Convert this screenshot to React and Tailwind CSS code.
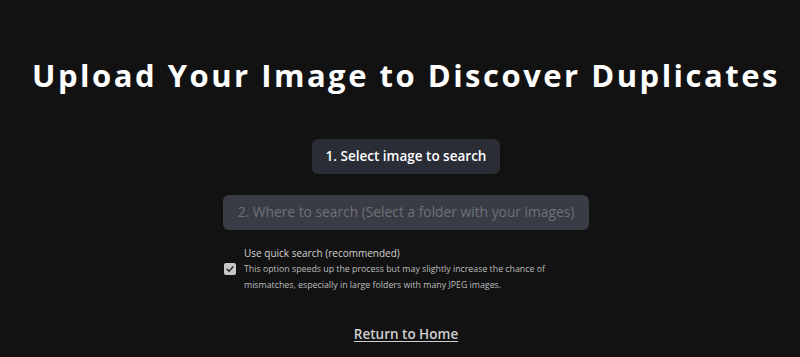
export default function App() {
  return (
    <div className="min-h-[357px] bg-[#121212] font-['Open_Sans',sans-serif] text-white">
      <div className="flex flex-col items-center pl-[12px] pt-[56px]">
        <h1 className="text-[31px] font-bold leading-[38px] tracking-[2.5px] text-white">
          Upload Your Image to Discover Duplicates
        </h1>

        <button className="mt-[45px] h-[35px] rounded-md bg-[#2a2d35] px-[14px] text-[13.5px] font-semibold text-white">
          1. Select image to search
        </button>

        <button
          disabled
          className="mt-[21px] h-[35px] w-[366px] rounded-md bg-[#393c44] text-[13.8px] text-[#6e7178]"
        >
          2. Where to search (Select a folder with your images)
        </button>

        <div className="mt-[15px] w-[366px] pl-[1px]">
          <p className="pl-[20px] text-[10px] leading-[16px] text-[#d4d4d4]">Use quick search (recommended)</p>
          <div className="flex items-start gap-[8px]">
            <span className="mt-[2px] grid h-[12px] w-[12px] shrink-0 place-items-center rounded-[2px] bg-[#c8c8c8]">
              <svg viewBox="0 0 12 12" className="h-[10px] w-[10px]">
                <path d="M2.5 6.2 5 8.6 9.6 3.4" fill="none" stroke="#2a2a2a" strokeWidth="1.8" strokeLinecap="round" strokeLinejoin="round" />
              </svg>
            </span>
            <p className="w-[310px] text-[8.8px] leading-[16px] text-[#bdbdbd]">
              This option speeds up the process but may slightly increase the chance of mismatches, especially in large folders with many JPEG images.
            </p>
          </div>
        </div>

        <a href="#" className="mt-[31px] text-[13.5px] font-semibold text-[#cfcfcf] underline underline-offset-2">
          Return to Home
        </a>
      </div>
    </div>
  );
}
